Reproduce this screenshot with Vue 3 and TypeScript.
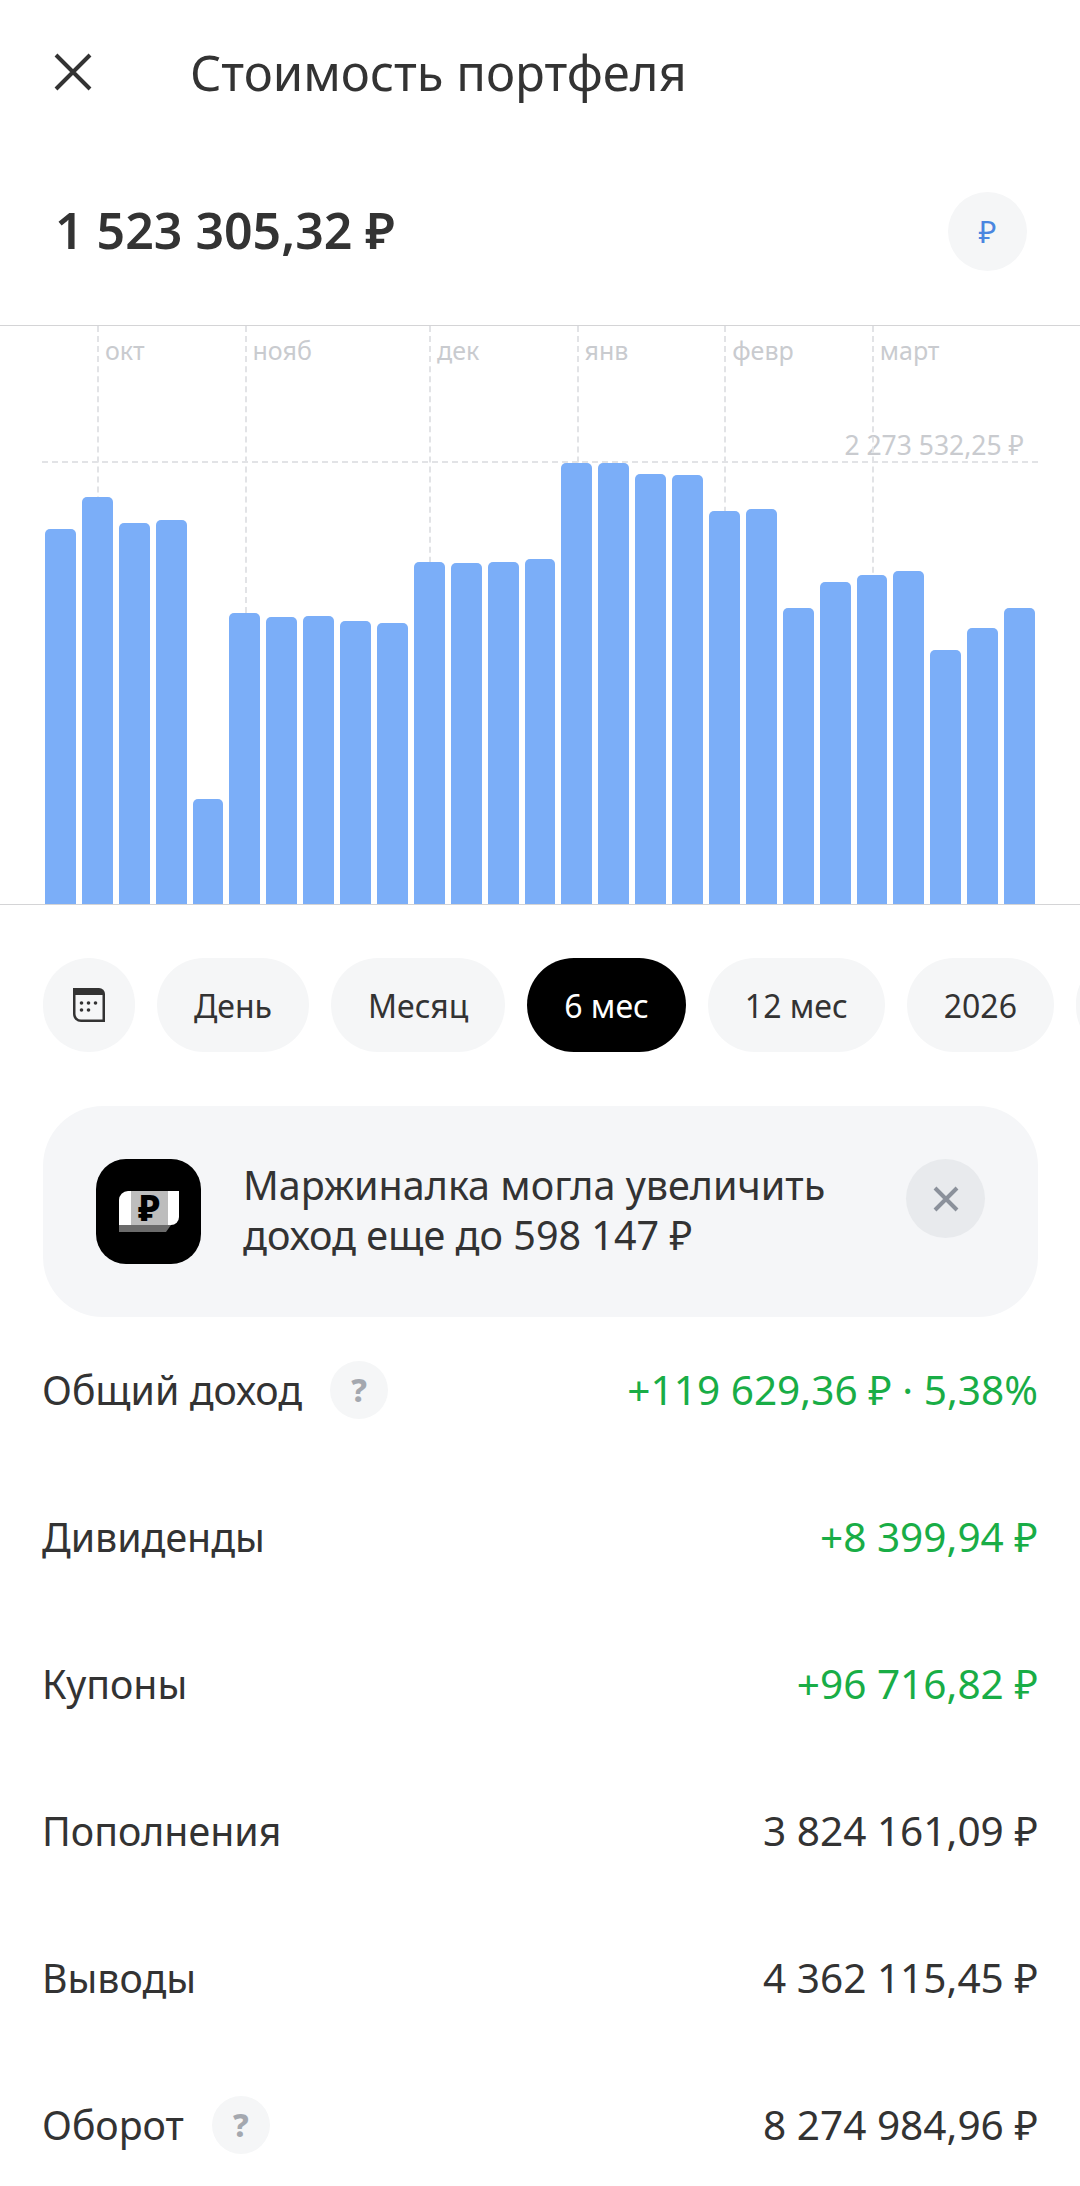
<script setup lang="ts">
const barTops = [
  529, 497, 523, 520, 799, 613, 617, 616, 621, 623, 562, 563, 562, 559,
  463, 463, 474, 475, 511, 509, 608, 582, 575, 571, 650, 628, 608,
];
const chartBottom = 904;

const months = [
  { name: "окт", bar: 1 },
  { name: "нояб", bar: 5 },
  { name: "дек", bar: 10 },
  { name: "янв", bar: 14 },
  { name: "февр", bar: 18 },
  { name: "март", bar: 22 },
];

const barX = (i: number) => 45 + i * 36.9 + 15;

const periods = ["День", "Месяц", "6 мес", "12 мес", "2026"];

const rows = [
  { label: "Общий доход", value: "+119 629,36 ₽ · 5,38%", green: true, hint: true },
  { label: "Дивиденды", value: "+8 399,94 ₽", green: true, hint: false },
  { label: "Купоны", value: "+96 716,82 ₽", green: true, hint: false },
  { label: "Пополнения", value: "3 824 161,09 ₽", green: false, hint: false },
  { label: "Выводы", value: "4 362 115,45 ₽", green: false, hint: false },
  { label: "Оборот", value: "8 274 984,96 ₽", green: false, hint: true },
];
</script>

<template>
  <div class="screen">
    <header class="top">
      <svg class="close" width="40" height="40" viewBox="0 0 40 40">
        <path d="M3 3l34 34M37 3L3 37" stroke="#333" stroke-width="4" fill="none" />
      </svg>
      <h1>Стоимость портфеля</h1>
    </header>

    <div class="total">
      <span class="amount">1 523 305,32 ₽</span>
      <span class="currency">₽</span>
    </div>

    <div class="chart">
      <div class="max-line"></div>
      <span class="max-label">2 273 532,25 ₽</span>
      <template v-for="m in months" :key="m.name">
        <div class="month-line" :style="{ left: barX(m.bar) + 'px' }"></div>
        <span class="month" :style="{ left: barX(m.bar) + 8 + 'px' }">{{ m.name }}</span>
      </template>
      <div class="bars">
        <div
          v-for="(top, i) in barTops"
          :key="i"
          class="bar"
          :style="{ height: chartBottom - top + 'px' }"
        ></div>
      </div>
    </div>

    <div class="periods">
      <button class="pill icon-pill">
        <svg width="36" height="36" viewBox="0 0 36 36">
          <path d="M2 1h26a6 6 0 0 1 6 6v28H10a8 8 0 0 1-8-8z" fill="#333" />
          <path d="M4.5 8h27v24.500H10a5.500 5.500 0 0 1-5.500-5.500z" fill="#f5f6f7" />
          <g fill="#333">
            <circle cx="10.500" cy="16" r="1.800" />
            <circle cx="17.500" cy="16" r="1.800" />
            <circle cx="24.500" cy="16" r="1.800" />
            <circle cx="10.500" cy="23" r="1.800" />
            <circle cx="17.500" cy="23" r="1.800" />
          </g>
        </svg>
      </button>
      <button v-for="p in periods" :key="p" class="pill" :class="{ active: p === '6 мес' }">{{ p }}</button>
      <button class="pill stub"></button>
    </div>

    <div class="banner">
      <div class="banner-icon">
        <svg class="banner-logo" width="60" height="41" viewBox="0 0 60 41">
          <path d="M9 0h51v26a8 8 0 0 1-8 8H0V9a9 9 0 0 1 9-9z" fill="#fff" />
          <rect x="12" y="0" width="37" height="34" fill="#bdbdbd" />
          <path d="M0 34h52l-5 7H0z" fill="#6b6b6b" />
          <text x="30" y="30" text-anchor="middle" class="banner-rub">₽</text>
        </svg>
      </div>
      <p class="banner-text">Маржиналка могла увеличить<br />доход еще до 598 147 ₽</p>
      <button class="banner-close">
        <svg width="28" height="28" viewBox="0 0 28 28">
          <path d="M3 3l22 22M25 3L3 25" stroke="#8b919b" stroke-width="4" fill="none" />
        </svg>
      </button>
    </div>

    <div class="rows">
      <div v-for="r in rows" :key="r.label" class="row">
        <span class="label">{{ r.label }}</span>
        <span v-if="r.hint" class="hint">?</span>
        <span class="value" :class="{ green: r.green }">{{ r.value }}</span>
      </div>
    </div>
  </div>
</template>

<style scoped>
.screen {
  width: 1080px;
  height: 2186px;
  overflow: hidden;
  background: #fff;
  color: #333;
  font-family: "Noto Sans", sans-serif;
}

.top {
  display: flex;
  align-items: center;
  height: 144px;
  padding-left: 53px;
}

.top h1 {
  margin: 0 0 0 97px;
  font-size: 49px;
  font-weight: 400;
  white-space: nowrap;
}

.total {
  display: flex;
  align-items: center;
  justify-content: space-between;
  height: 90px;
  padding: 0 53px 0 55px;
  margin-top: 42px;
}

.amount {
  font-size: 50px;
  font-weight: 600;
  margin-top: -2px;
}

.currency {
  width: 79px;
  height: 79px;
  border-radius: 50%;
  background: #f5f6f7;
  color: #4a86e0;
  font-size: 31px;
  display: flex;
  align-items: center;
  justify-content: center;
}

.chart {
  position: relative;
  height: 578px;
  margin-top: 49px;
  border-top: 1px solid #d4d4d6;
  border-bottom: 1px solid #d4d4d6;
}

.max-line {
  position: absolute;
  left: 42px;
  right: 42px;
  top: 135px;
  border-top: 2px dashed #e2e3e6;
}

.max-label {
  position: absolute;
  right: 56px;
  top: 101px;
  font-size: 26.500px;
  color: #c9cbcf;
}

.month-line {
  position: absolute;
  top: 0;
  bottom: 0;
  border-left: 2px dashed #e2e3e6;
}

.month {
  position: absolute;
  top: 7px;
  font-size: 25px;
  color: #c9cbcf;
}

.bars {
  position: absolute;
  left: 45px;
  right: 45px;
  bottom: 0;
  height: 100%;
  display: flex;
  align-items: flex-end;
  gap: 6px;
}

.bar {
  flex: 1;
  background: #7baef8;
  border-radius: 5px 5px 0 0;
}

.periods {
  display: flex;
  gap: 22px;
  margin-top: 53px;
  padding-left: 43px;
  white-space: nowrap;
}

.pill {
  flex: none;
  height: 94px;
  padding: 0 37px;
  border: 0;
  border-radius: 47px;
  background: #f5f6f7;
  color: #333;
  font-family: inherit;
  font-size: 32px;
}

.pill.active {
  background: #000;
  color: #fff;
}

.icon-pill {
  width: 92px;
  padding: 0;
  display: flex;
  align-items: center;
  justify-content: center;
}

.stub {
  width: 90px;
}

.banner {
  display: flex;
  align-items: flex-start;
  margin: 54px 42px 0 43px;
  height: 211px;
  padding: 53px;
  box-sizing: border-box;
  border-radius: 60px;
  background: #f5f6f8;
}

.banner-icon {
  flex: none;
  width: 105px;
  height: 105px;
  border-radius: 30px;
  background: #000;
  display: flex;
  align-items: center;
  justify-content: center;
}

.banner-logo {
  overflow: visible;
}

.banner-rub {
  font-size: 36px;
  font-weight: 800;
  fill: #000;
  font-family: "Noto Sans", sans-serif;
}

.banner-text {
  flex: 1;
  margin: 1px 0 0 42px;
  font-size: 39.500px;
  line-height: 50px;
  white-space: nowrap;
  color: #333;
}

.banner-close {
  flex: none;
  width: 79px;
  height: 79px;
  padding: 0;
  border: 0;
  border-radius: 50%;
  background: #e8eaed;
  display: flex;
  align-items: center;
  justify-content: center;
}

.rows {
  margin-top: -1px;
  padding: 0 42px;
}

.row {
  display: flex;
  align-items: center;
  height: 147px;
  font-size: 39.300px;
}

.hint {
  width: 58px;
  height: 58px;
  margin-left: 28px;
  border-radius: 50%;
  background: #f5f6f7;
  color: #a4a8af;
  font-size: 32px;
  font-weight: 800;
  display: flex;
  align-items: center;
  justify-content: center;
}

.value {
  margin-left: auto;
  font-size: 40.600px;
}

.value.green {
  color: #19ad46;
}
</style>
